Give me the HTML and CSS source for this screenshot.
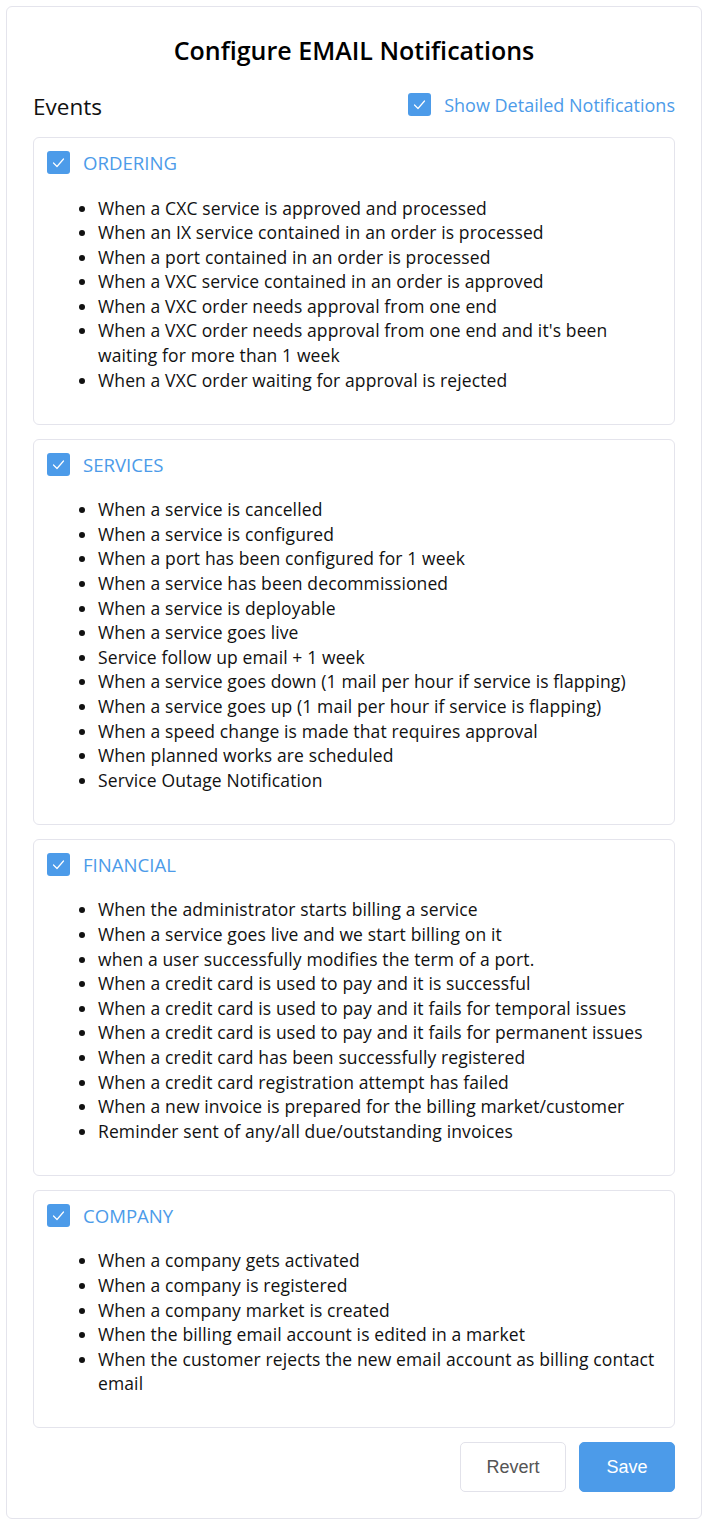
FILE: index.html
```html
<!DOCTYPE html>
<html lang="en">
<head>
<meta charset="utf-8">
<title>Configure EMAIL Notifications</title>
<link rel="stylesheet" href="styles.css">
</head>
<body>
<div class="panel">
  <h1 class="title">Configure EMAIL Notifications</h1>
  <div class="events-row">
    <h2 class="events">Events</h2>
    <label class="detail-toggle">
      <span class="check"><svg viewBox="0 0 23 23" width="23" height="23"><path d="M6.5 12 L10 15.5 L16.5 8" fill="none" stroke="#fff" stroke-width="1.2" stroke-linecap="round" stroke-linejoin="round"/></svg></span>
      <span class="toggle-label">Show Detailed Notifications</span>
    </label>
  </div>

  <section class="group">
    <div class="group-head">
      <span class="check"><svg viewBox="0 0 23 23" width="23" height="23"><path d="M6.5 12 L10 15.5 L16.5 8" fill="none" stroke="#fff" stroke-width="1.2" stroke-linecap="round" stroke-linejoin="round"/></svg></span>
      <span class="group-label">ORDERING</span>
    </div>
    <ul class="items">
      <li>When a CXC service is approved and processed</li>
      <li>When an IX service contained in an order is processed</li>
      <li>When a port contained in an order is processed</li>
      <li>When a VXC service contained in an order is approved</li>
      <li>When a VXC order needs approval from one end</li>
      <li>When a VXC order needs approval from one end and it's been waiting for more than 1 week</li>
      <li>When a VXC order waiting for approval is rejected</li>
    </ul>
  </section>

  <section class="group">
    <div class="group-head">
      <span class="check"><svg viewBox="0 0 23 23" width="23" height="23"><path d="M6.5 12 L10 15.5 L16.5 8" fill="none" stroke="#fff" stroke-width="1.2" stroke-linecap="round" stroke-linejoin="round"/></svg></span>
      <span class="group-label">SERVICES</span>
    </div>
    <ul class="items">
      <li>When a service is cancelled</li>
      <li>When a service is configured</li>
      <li>When a port has been configured for 1 week</li>
      <li>When a service has been decommissioned</li>
      <li>When a service is deployable</li>
      <li>When a service goes live</li>
      <li>Service follow up email + 1 week</li>
      <li>When a service goes down (1 mail per hour if service is flapping)</li>
      <li>When a service goes up (1 mail per hour if service is flapping)</li>
      <li>When a speed change is made that requires approval</li>
      <li>When planned works are scheduled</li>
      <li>Service Outage Notification</li>
    </ul>
  </section>

  <section class="group">
    <div class="group-head">
      <span class="check"><svg viewBox="0 0 23 23" width="23" height="23"><path d="M6.5 12 L10 15.5 L16.5 8" fill="none" stroke="#fff" stroke-width="1.2" stroke-linecap="round" stroke-linejoin="round"/></svg></span>
      <span class="group-label">FINANCIAL</span>
    </div>
    <ul class="items">
      <li>When the administrator starts billing a service</li>
      <li>When a service goes live and we start billing on it</li>
      <li>when a user successfully modifies the term of a port.</li>
      <li>When a credit card is used to pay and it is successful</li>
      <li>When a credit card is used to pay and it fails for temporal issues</li>
      <li>When a credit card is used to pay and it fails for permanent issues</li>
      <li>When a credit card has been successfully registered</li>
      <li>When a credit card registration attempt has failed</li>
      <li>When a new invoice is prepared for the billing market/customer</li>
      <li>Reminder sent of any/all due/outstanding invoices</li>
    </ul>
  </section>

  <section class="group">
    <div class="group-head">
      <span class="check"><svg viewBox="0 0 23 23" width="23" height="23"><path d="M6.5 12 L10 15.5 L16.5 8" fill="none" stroke="#fff" stroke-width="1.2" stroke-linecap="round" stroke-linejoin="round"/></svg></span>
      <span class="group-label">COMPANY</span>
    </div>
    <ul class="items">
      <li>When a company gets activated</li>
      <li>When a company is registered</li>
      <li>When a company market is created</li>
      <li>When the billing email account is edited in a market</li>
      <li>When the customer rejects the new email account as billing contact email</li>
    </ul>
  </section>

  <div class="actions">
    <button class="btn btn-revert" type="button">Revert</button>
    <button class="btn btn-save" type="button">Save</button>
  </div>
</div>
</body>
</html>
```

FILE: styles.css
```css
* { box-sizing: border-box; }

body {
  margin: 0;
  background: #fff;
  font-family: "Open Sans", "Noto Sans", sans-serif;
  color: #111;
}

.panel {
  margin: 6px 6px 6px 6px;
  border: 1px solid #e4e4ec;
  border-radius: 6px;
  padding: 28px 26px 26px 26px;
}

.title {
  margin: 0;
  text-align: center;
  font-size: 25px;
  line-height: 30px;
  font-weight: 600;
  color: #000;
}

.events-row {
  margin-top: 27px;
  height: 30px;
  display: flex;
  align-items: center;
  justify-content: space-between;
}

.events {
  margin: 0;
  font-size: 22.5px;
  font-weight: 400;
  line-height: 30px;
  color: #111;
}

.detail-toggle {
  display: flex;
  align-items: center;
  gap: 13px;
  margin-top: -5px;
}

.check {
  width: 23px;
  height: 23px;
  border-radius: 3px;
  background: #4c9be9;
  display: block;
  flex: none;
}

.check svg { display: block; }

.toggle-label {
  font-size: 18px;
  color: #4c9be9;
}

.group {
  margin-top: 15px;
  border: 1px solid #e4e4ec;
  border-radius: 6px;
  padding: 13px 10px 13px 13px;
}

.group + .group { margin-top: 14px; }

.group-head {
  display: flex;
  align-items: center;
  gap: 13px;
  height: 23px;
}

.group-label {
  font-size: 18.6px;
  color: #4c9be9;
}

.items {
  margin: 21.5px 0 18.5px 0;
  padding-left: 51px;
  font-size: 17.5px;
  letter-spacing: 0.12px;
  line-height: 24.6px;
  color: #111;
}

.actions {
  margin-top: 14px;
  display: flex;
  justify-content: flex-end;
  gap: 13px;
}

.btn {
  height: 50px;
  border-radius: 5px;
  font-family: "Liberation Sans", Arial, sans-serif;
  font-size: 18px;
  cursor: pointer;
}

.btn-revert {
  width: 106px;
  background: #fff;
  border: 1px solid #e2e2ea;
  color: #555;
}

.btn-save {
  width: 96px;
  background: #4c9be9;
  border: 1px solid #4c9be9;
  color: #fff;
}
```
